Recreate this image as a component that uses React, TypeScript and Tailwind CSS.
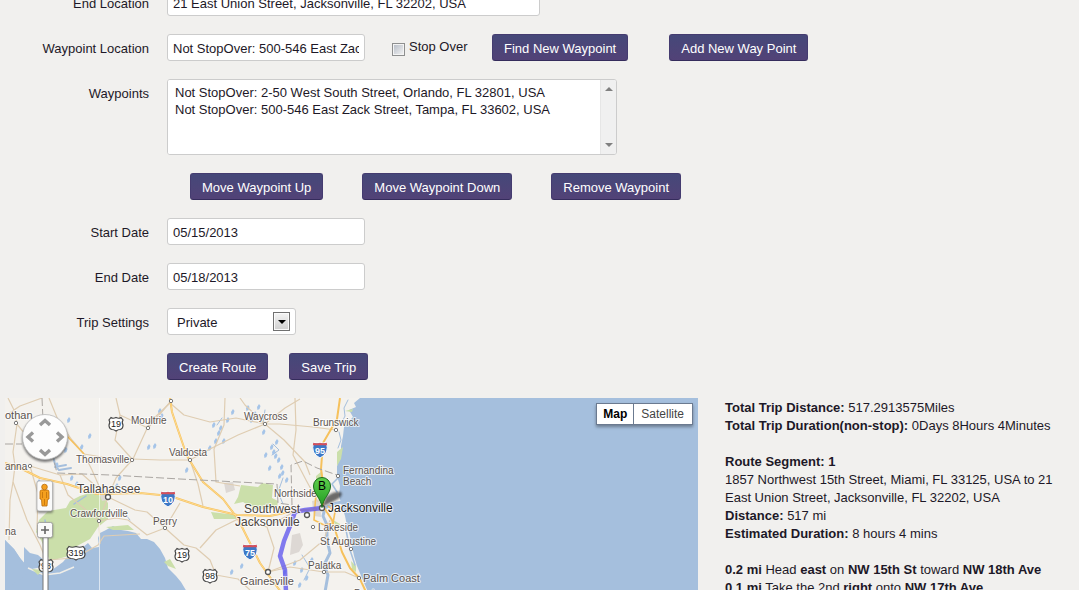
import React from 'react';

type ButtonProps = { children: React.ReactNode };

function Button({ children }: ButtonProps) {
  return (
    <button
      type="button"
      className="h-[27px] shrink-0 rounded-[3px] border border-[#453c70] border-b-[#352c5c] bg-linear-to-b from-[#454879] to-[#524277] px-[11px] pt-[2px] text-[13px] leading-[18px] whitespace-nowrap text-white"
    >
      {children}
    </button>
  );
}

type RowProps = { label: string; htmlFor: string; children: React.ReactNode };

function Row({ label, htmlFor, children }: RowProps) {
  return (
    <div className="flex items-start gap-[18px]">
      <label htmlFor={htmlFor} className="w-[149px] shrink-0 pt-[6px] text-right">
        {label}
      </label>
      {children}
    </div>
  );
}

const field =
  'h-[27px] rounded-[3px] border border-[#cccccc] bg-white px-[5px] pt-[2px] text-[13px] leading-[18px] outline-none';

type Place = { t: string; x: number; y: number; kind: 's' | 'g' | 'm' | 'l' };

const places: Place[] = [
  { t: 'othan', x: 5, y: 419, kind: 'g' },
  { t: 'Moultrie', x: 131, y: 424, kind: 's' },
  { t: 'Thomasville', x: 76, y: 463, kind: 's' },
  { t: 'anna', x: 5, y: 470, kind: 's' },
  { t: 'Tallahassee', x: 77, y: 493, kind: 'm' },
  { t: 'Crawfordville', x: 70, y: 517, kind: 's' },
  { t: 'Perry', x: 153, y: 525, kind: 's' },
  { t: 'na', x: 5, y: 535, kind: 's' },
  { t: 'Waycross', x: 244, y: 420, kind: 's' },
  { t: 'Brunswick', x: 313, y: 426, kind: 's' },
  { t: 'Valdosta', x: 169, y: 456, kind: 's' },
  { t: 'Fernandina', x: 343, y: 474, kind: 's' },
  { t: 'Beach', x: 343, y: 485, kind: 's' },
  { t: 'Northside', x: 274, y: 497, kind: 's' },
  { t: 'Southwest', x: 244, y: 513, kind: 'm' },
  { t: 'Jacksonville', x: 235, y: 526, kind: 'm' },
  { t: 'Jacksonville', x: 328, y: 512, kind: 'l' },
  { t: 'Lakeside', x: 318, y: 531, kind: 's' },
  { t: 'St Augustine', x: 320, y: 545, kind: 's' },
  { t: 'Palatka', x: 308, y: 569, kind: 's' },
  { t: 'Gainesville', x: 240, y: 585, kind: 'g' },
  { t: 'Palm Coast', x: 363, y: 582, kind: 'g' },
  { t: 'Daytona', x: 354, y: 597, kind: 's' },
];

const placeStyle = {
  s: 'text-[10px] fill-[#5c5450]',
  g: 'text-[11px] fill-[#5c5450]',
  m: 'text-[12px] fill-[#4a4440]',
  l: 'text-[12px] fill-[#222222]',
};

const towns = [
  [16, 423], [148, 428], [132, 460], [30, 466], [99, 521], [165, 528],
  [171, 401], [190, 460], [265, 424], [336, 430], [338, 476], [313, 527],
  [351, 549], [324, 572], [359, 578],
];

const cities = [[108, 497], [307, 515], [268, 572], [322, 508]];

const ponds = [
  [212, 425], [217, 433], [222, 441], [208, 448], [253, 414], [246, 408], [262, 432],
  [272, 452], [277, 460], [268, 468], [281, 473], [275, 442], [285, 480], [226, 420],
  [231, 412], [185, 470], [158, 411], [160, 416], [147, 447], [153, 446], [64, 450],
  [80, 447], [37, 482], [293, 563], [300, 570], [305, 578], [298, 585], [310, 560],
  [283, 572], [230, 572], [240, 566], [55, 465], [115, 486], [118, 478], [67, 420],
  [270, 447], [274, 456], [280, 467], [278, 476], [264, 455], [219, 428], [214, 441],
  [250, 420], [257, 407], [70, 478], [75, 484], [88, 436], [60, 431],
];

type ShieldProps = { x: number; y: number; n: string };

function Interstate({ x, y, n }: ShieldProps) {
  return (
    <g transform={`translate(${x} ${y})`}>
      <path
        d="M-6.5-7.5Q-3-6.5 0-7.5Q3-6.5 6.5-7.5Q8-2 6.5 2Q4 6 0 8Q-4 6-6.5 2Q-8-2-6.5-7.5Z"
        fill="#3d78c6"
        stroke="#fff"
        strokeWidth="1"
      />
      <path d="M-6.7-7.3Q-3-6.3 0-7.3Q3-6.3 6.7-7.3L7.2-4.8H-7.2Z" fill="#d8505a" />
      <text y="3.5" textAnchor="middle" className="fill-white text-[9px] font-bold">
        {n}
      </text>
    </g>
  );
}

function UsRoute({ x, y, n }: ShieldProps) {
  return (
    <g transform={`translate(${x} ${y})`}>
      <path
        d={
          n.length > 2
            ? 'M-7-6.500Q-4-5 0-6.500Q4-5 7-6.500L9-4Q7.500-2 9 1Q9 5 5 5.500Q2 5.500 0 7Q-2 5.500-5 5.500Q-9 5-9 1Q-7.500-2-9-4Z'
            : 'M-5-6.500Q-3-5 0-6.500Q3-5 5-6.500L7-4Q5.500-2 7 1Q7 5 4 5.500Q2 5.500 0 7Q-2 5.500-4 5.500Q-7 5-7 1Q-5.500-2-7-4Z'
        }
        fill="#fff"
        stroke="#444"
        strokeWidth="1.2"
      />
      <text y="3" textAnchor="middle" className="fill-[#222222] text-[9px]">
        {n}
      </text>
    </g>
  );
}

function MapDrawing() {
  return (
    <svg
      viewBox="5 398 693 240"
      className="block h-[240px] w-[693px] max-w-none"
      role="img"
      aria-label="Trip route map"
    >
      <defs>
        <filter id="soft" x="-50%" y="-50%" width="200%" height="200%">
          <feGaussianBlur stdDeviation="1.2" />
        </filter>
        <linearGradient id="pin" x1="0" y1="0" x2="0" y2="1">
          <stop offset="0" stopColor="#5fd04c" />
          <stop offset="1" stopColor="#1f9a22" />
        </linearGradient>
      </defs>
      <path
        d="M5 398H360L354 403L356 407L349 410L353 417L348 422L344 427L343 436L341 446L341 456L337 466L337 476L340 486L339 496L342 506L345 516L347 526L350 536L352 546L354 556L357 566L362 578L368 592L380 638H205L187 592L181 582L176 576L168 568L165 558L160 549L154 542L147 539L141 539L136 533L128 531L121 530L113 526L106 530L100 533L98 538L99 547L92 548L88 543L82 548L74 550L68 556L63 562L52 570L42 572L32 569L42 567L46 562L38 555L30 553L24 547V570L14 568L22 561L14 549L5 540Z"
        fill="#f4f2ee"
      />
      <path d="M5 540L14 549L20 558L28 567L42 573L52 571L66 569L76 567L62 573L44 577L30 572L5 590Z" fill="#a5bfdd" />
      <path d="M28 568L44 575L60 573L74 567" stroke="#f0eee8" strokeWidth="1.5" fill="none" />
      <g fill="#cbdfaa">
        <path d="M48 511L66 508L70 501L80 496L92 492L103 497L108 503L108 519L98 527L90 539L77 546L69 556L50 561L45 549L41 540L36 532L39 520Z" />
        <path d="M241 485L258 487L262 483L273 485L272 498L278 501L277 508L256 510L243 502L234 504L238 497Z" />
        <path d="M211 512L237 515L238 519L214 519ZM337 452L343 447L341 459L337 466ZM316 476L322 471L323 480L316 484ZM345 411L353 409L352 412ZM351 561L356 566L356 572L352 569ZM164 562L170 559L176 569L168 566ZM32 569L42 570L38 575Z" />
        <path d="M106 527L128 525L134 530L113 530ZM333 520L340 524L338 530Z" />
      </g>
      <g fill="#ddd8d4">
        <path d="M224 483L233 482L235 490L226 493ZM292 535L300 533L303 545L299 552L290 555ZM98 490L109 491L111 499L102 501ZM312 501L320 499L321 517L314 516Z" />
      </g>
      <g fill="none" stroke="#a5bfdd" strokeLinecap="round" strokeLinejoin="round">
        <path d="M342 502L333 504L325 508L323 516L327 525L327 540L330 553L324 565L328 575L325 592" strokeWidth="3" />
        <path d="M53 456L55 464L58 469M55 467L66 465M59 470L71 468" strokeWidth="2" />
        <path d="M45 520L48 535L44 550M74 504L80 500L86 496M338 478L332 484L337 492M346 530L350 550L355 565" strokeWidth="1.5" />
        <path d="M348 400L344 408L345 416L341 424M339 432L341 440L338 448M283 478L278 492L283 504M265 410L263 423M217 425L222 418M272 455L279 450L273 444M302 555L310 568L304 580M122 510L130 520" strokeWidth="1" />
      </g>
      <g fill="#a5c4e8">
        {ponds.map(([x, y]) => (
          <path key={`${x}-${y}`} d={`M${x} ${y}l2-3 1.500 2-1 3-2 1z`} />
        ))}
      </g>
      <g fill="none" stroke="#dfcdb2" strokeWidth="1.2" strokeLinejoin="round">
        <path d="M8 398L14 410L17 424L15 438L13 452L15 466L13 482L10 500L9 540" />
        <path d="M5 416L20 406L42 398M16 423L30 440L44 450M30 466L60 475L82 474L108 497" />
        <path d="M49 398L58 420L72 440L84 454L92 470L99 486L108 497" />
        <path d="M170 403L150 422L133 459L116 478L108 497L99 521L100 544" />
        <path d="M84 454L108 458L132 459L160 460L190 460L210 449L238 435L265 424" />
        <path d="M170 403L184 415L210 422L236 418L265 424L280 424L313 427L336 430" />
        <path d="M108 497L135 510L147 512L165 528L184 545L196 548L210 560L216 575L238 579L250 590" />
        <path d="M99 521L116 518L128 520L147 535L165 528" />
        <path d="M225 398L224 425L214 449L216 482L240 486M265 424L245 405L240 398M265 424L285 408L300 399" />
        <path d="M295 398L296 430L293 455L306 480L318 502M265 424L284 440L305 462L310 475" />
        <path d="M180 503L165 528M238 519L216 530L200 548M238 519L267 527L292 513M267 527L274 548L268 572L290 567L324 572" />
        <path d="M268 572L300 560L324 540L330 520M324 572L345 572L359 578M190 460L198 484L203 506M13 482L27 520L40 545L46 560L75 558L98 545L104 536L140 534" />
        <path d="M116 398L120 415L148 428L171 401M120 415L115 440L132 459M30 466L38 494L37 530M60 475L68 495L99 521" />
      </g>
      <g fill="none" strokeLinejoin="round">
        <g stroke="#f6c15c" strokeWidth="2">
          <path d="M170 398L172 412L178 430L187 456L203 482L223 499L238 519L250 543L260 563L272 580L281 592" />
          <path d="M5 463L20 468L40 478L67 484L97 494L140 493L170 496L203 507L237 515L270 516L293 511L317 509" />
          <path d="M340 398L337 419L323 443L321 469L324 490L323 506L332 520L337 536L342 552L350 568L360 579L366 592" />
          <path d="M316 493L314 520L324 525L333 523L335 512L328 506M49 420L68 437L84 454" strokeWidth="1.6" />
        </g>
        <g stroke="#ffe09a" strokeWidth="0.8">
          <path d="M170 398L172 412L178 430L187 456L203 482L223 499L238 519L250 543L260 563L272 580L281 592" />
          <path d="M5 463L20 468L40 478L67 484L97 494L140 493L170 496L203 507L237 515L270 516L293 511L317 509" />
        </g>
        <path
          d="M5 444H22M42 398L43 420L50 445L57 473L110 475L180 479L277 484L278 503L292 505L291 465L303 461L317 468L337 475"
          stroke="#aaa6a2"
          strokeWidth="1"
          strokeDasharray="8 3"
        />
      </g>
      <path d="M99.500 398V638" stroke="#fff" strokeOpacity="0.6" />

      <path
        d="M322 508L305 510L295 512L290 526L284 541L280 556L285 570L286 592"
        fill="none"
        stroke="#5a50ee"
        strokeOpacity="0.75"
        strokeWidth="4.500"
        strokeLinejoin="round"
      />

      <g fill="#fff" stroke="#777" strokeWidth="1">
        {towns.map(([x, y]) => (
          <circle key={`${x}-${y}`} cx={x} cy={y} r="1.700" />
        ))}
      </g>
      <g fill="#fff" stroke="#555" strokeWidth="1.300">
        {cities.map(([x, y]) => (
          <circle key={`${x}-${y}`} cx={x} cy={y} r="2.500" />
        ))}
      </g>

      <UsRoute x={116} y={424} n="19" />
      <UsRoute x={76} y={553} n="319" />
      <UsRoute x={46} y={566} n="98" />
      <UsRoute x={182} y={555} n="19" />
      <UsRoute x={210} y={576} n="98" />
      <Interstate x={168} y={499} n="10" />
      <Interstate x={320} y={450} n="95" />
      <Interstate x={250} y={552} n="75" />

      <g stroke="#fff" strokeOpacity="0.7" strokeWidth="2" strokeLinejoin="round" style={{ paintOrder: 'stroke' }}>
        {places.map((p) => (
          <text key={`${p.t}-${p.y}`} x={p.x} y={p.y} className={placeStyle[p.kind]}>
            {p.t}
          </text>
        ))}
      </g>

      <path d="M322 507L326 497Q334 491 341 492Q344 496 336 500Z" fill="#222" opacity="0.65" filter="url(#soft)" />
      <path
        d="M322 507.500C321 498 313.500 494 313.500 486A8.500 8.500 0 0 1 330.500 486C330.500 494 323 498 322 507.500Z"
        fill="url(#pin)"
        stroke="#1c6b1c"
        strokeWidth="1"
      />
      <text x="322" y="490" textAnchor="middle" className="fill-black text-[12px]">
        B
      </text>

      <circle cx="45" cy="439" r="23" fill="#444" opacity="0.7" filter="url(#soft)" />
      <circle cx="45" cy="437" r="22.500" fill="#fdfdfd" stroke="#bbb" strokeWidth="0.800" />
      <g fill="none" stroke="#999" strokeWidth="3.400">
        <path d="M40 425L45 420.500L50 425M40 450L45 454.500L50 450M33 432.500L28 437L33 441.500M57 432.500L62 437L57 441.500" />
      </g>

      <rect x="37" y="482" width="16" height="31" rx="2" fill="#444" opacity="0.6" filter="url(#soft)" />
      <rect x="37" y="481" width="15.500" height="30" rx="2" fill="#fafafa" stroke="#aaa" strokeWidth="0.700" />
      <g fill="#f5a01e" stroke="#b86b0a" strokeWidth="0.800">
        <path d="M41.500 490H47.500Q49 490 49 492V499L47.500 499.500L47 506H42L41.500 499.500L40 499V492Q40 490 41.500 490Z" />
        <circle cx="44.500" cy="487" r="2.800" />
      </g>
      <path d="M42.500 492V498M46.500 492V498M44.500 499V505" stroke="#b86b0a" strokeWidth="0.700" />

      <rect x="43" y="537" width="5" height="110" fill="#fff" stroke="#777" strokeWidth="1" />
      <rect x="38" y="523" width="15" height="15" rx="2" fill="#444" opacity="0.6" filter="url(#soft)" />
      <rect x="37.500" y="522.500" width="15" height="15" rx="2" fill="#fafafa" stroke="#999" strokeWidth="0.800" />
      <path d="M41 530H49M45 526V534" stroke="#666" strokeWidth="1.600" />
    </svg>
  );
}

export default function App() {
  return (
    <main className="flex h-screen flex-col gap-[18px] overflow-hidden bg-[#f1f0ee] font-['Liberation_Sans',Arial,sans-serif] text-[13px] leading-[18px] text-[#1d1827]">
      <form className="-mt-[11px] flex shrink-0 flex-col gap-[18px]">
        <Row label="End Location" htmlFor="end-location">
          <input
            id="end-location"
            type="text"
            className={`${field} w-[373px]`}
            defaultValue="21 East Union Street, Jacksonville, FL 32202, USA"
          />
        </Row>
        <Row label="Waypoint Location" htmlFor="waypoint-location">
          <div className="flex items-start">
            <input
              id="waypoint-location"
              type="text"
              className={`${field} w-[198px]`}
              defaultValue="Not StopOver: 500-546 East Zack Street, Tampa, FL 33602, USA"
            />
            <label className="ml-[27px] flex w-[100px] shrink-0 items-start gap-1 pt-1">
              <input
                type="checkbox"
                className="mt-[5px] size-[13px] shrink-0 appearance-none border border-[#8e8f8f] bg-linear-to-br from-[#b4bac4] to-[#f6f6f6] shadow-[inset_0_0_0_1px_#f4f4f4]"
              />
              Stop Over
            </label>
            <div className="flex gap-[41px]">
              <Button>Find New Waypoint</Button>
              <Button>Add New Way Point</Button>
            </div>
          </div>
        </Row>
        <div className="flex flex-col gap-[18px]">
          <Row label="Waypoints" htmlFor="waypoints">
            <div className="flex h-[76px] w-[450px] overflow-hidden rounded-[3px] border border-[#cccccc] bg-white">
              <select
                id="waypoints"
                multiple
                size={4}
                className="h-full flex-1 [scrollbar-width:none] overflow-hidden bg-white px-[5px] pt-[5px] text-[13px] outline-none"
              >
                <option className="h-[17px] min-h-0 px-[2px] py-0 leading-[17px]">
                  Not StopOver: 2-50 West South Street, Orlando, FL 32801, USA
                </option>
                <option className="h-[17px] min-h-0 px-[2px] py-0 leading-[17px]">
                  Not StopOver: 500-546 East Zack Street, Tampa, FL 33602, USA
                </option>
              </select>
              <div
                aria-hidden="true"
                className="flex w-4 flex-col items-center justify-between border-l border-[#e6e6e6] bg-[#f0f0f0] py-[6px]"
              >
                <svg viewBox="0 0 8 6" className="h-[6px] w-2">
                  <path d="M0 5L4 1L8 5Z" fill="#808080" />
                </svg>
                <svg viewBox="0 0 8 6" className="h-[6px] w-2">
                  <path d="M0 1L4 5L8 1Z" fill="#808080" />
                </svg>
              </div>
            </div>
          </Row>
          <div className="flex gap-[39px] pl-[190px]">
            <Button>Move Waypoint Up</Button>
            <Button>Move Waypoint Down</Button>
            <Button>Remove Waypoint</Button>
          </div>
        </div>
        <Row label="Start Date" htmlFor="start-date">
          <input id="start-date" type="text" className={`${field} w-[198px]`} defaultValue="05/15/2013" />
        </Row>
        <Row label="End Date" htmlFor="end-date">
          <input id="end-date" type="text" className={`${field} w-[198px]`} defaultValue="05/18/2013" />
        </Row>
        <Row label="Trip Settings" htmlFor="trip-settings">
          <div className="relative">
            <select
              id="trip-settings"
              className="h-[27px] w-[129px] appearance-none rounded-[3px] border border-[#cccccc] bg-white px-[9px] pt-[2px] text-[13px] leading-[18px] outline-none"
            >
              <option>Private</option>
              <option>Public</option>
            </select>
            <span
              aria-hidden="true"
              className="pointer-events-none absolute top-1 right-[6px] flex h-[19px] w-[17px] items-center justify-center border border-[#707070] bg-linear-to-b from-[#f4f4f4] to-[#cfcfcf] shadow-[inset_0_0_0_1px_#fafafa]"
            >
              <svg viewBox="0 0 8 4" className="h-1 w-2">
                <path d="M0 0H8L4 4Z" fill="#000" />
              </svg>
            </span>
          </div>
        </Row>
        <div className="flex gap-[21px] pl-[167px]">
          <Button>Create Route</Button>
          <Button>Save Trip</Button>
        </div>
      </form>

      <div className="flex shrink-0 items-start gap-[27px] pl-[5px]">
        <section className="relative h-[240px] min-w-0 flex-1 overflow-hidden bg-[#a5bfdd]">
          <MapDrawing />
          <div className="absolute top-[5px] right-[5px] flex border border-[#6b7a90] bg-white text-[12px] leading-5 shadow-[0_2px_3px_rgba(0,0,0,0.35)]">
            <button type="button" className="border-r border-[#6b7a90] px-[6px] font-bold text-black">
              Map
            </button>
            <button type="button" className="pr-2 pl-[7px] text-[#444444]">
              Satellite
            </button>
          </div>
        </section>
        <section className="w-[354px] shrink-0 pt-px pr-4">
          <p>
            <b>Total Trip Distance:</b> 517.2913575Miles
          </p>
          <p>
            <b>Total Trip Duration(non-stop):</b> 0Days 8Hours 4Minutes
          </p>
          <p className="mt-[18px]">
            <b>Route Segment: 1</b>
          </p>
          <p>1857 Northwest 15th Street, Miami, FL 33125, USA to 21 East Union Street, Jacksonville, FL 32202, USA</p>
          <p>
            <b>Distance:</b> 517 mi
          </p>
          <p>
            <b>Estimated Duration:</b> 8 hours 4 mins
          </p>
          <p className="mt-[18px]">
            <b>0.2 mi</b> Head <b>east</b> on <b>NW 15th St</b> toward <b>NW 18th Ave</b>
          </p>
          <p>
            <b>0.1 mi</b> Take the 2nd <b>right</b> onto <b>NW 17th Ave</b>
          </p>
        </section>
      </div>
    </main>
  );
}
